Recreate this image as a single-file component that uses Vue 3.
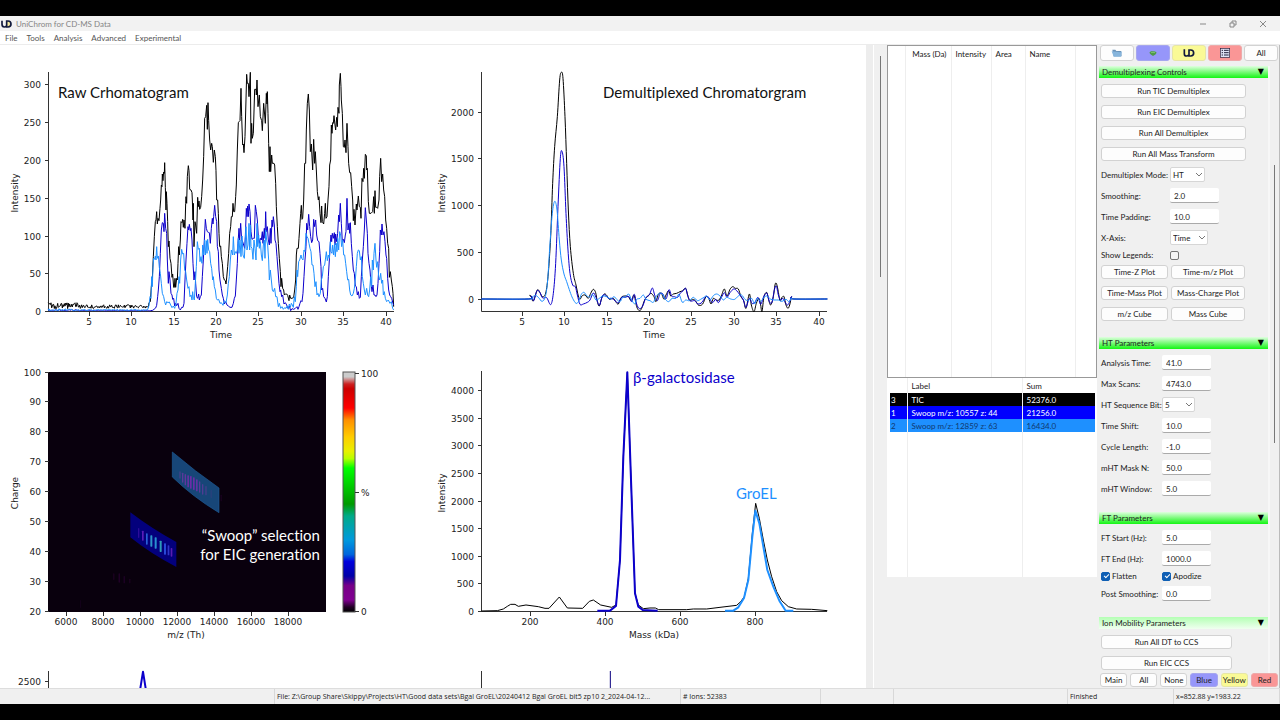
<template>
  <div class="screen">
    <div class="window">
      <!-- Title bar -->
      <header class="title-bar">
        <svg class="logo" viewBox="0 0 33 24" aria-hidden="true">
          <path d="M17 3h4q9 0 9 9t-9 9h-4z" fill="#f5e9a0" stroke="#111a3c" stroke-width="5" />
          <path d="M3 2v11q0 8 7 8 4 0 6-3" fill="none" stroke="#111a3c" stroke-width="5" />
        </svg>
        <h1 class="title">UniChrom for CD-MS Data</h1>
        <div class="window-buttons">
          <button class="window-btn" aria-label="Minimize">
            <svg viewBox="0 0 10 10"><path d="M2 5h6" /></svg>
          </button>
          <button class="window-btn" aria-label="Restore">
            <svg viewBox="0 0 10 10"><path d="M2 4h4v4h-4zM4 4v-2h4v4h-2" /></svg>
          </button>
          <button class="window-btn" aria-label="Close">
            <svg viewBox="0 0 10 10"><path d="M2 2l6 6M8 2l-6 6" /></svg>
          </button>
        </div>
      </header>

      <!-- Menu -->
      <nav class="menu-bar">
        <button v-for="m in menus" :key="m" class="menu-item">{{ m }}</button>
      </nav>

      <div class="workspace">
        <!-- Plots -->
        <main class="plots">
          <svg v-for="p in plots" :key="p.id" class="plot" viewBox="0 0 433 300" role="img" :aria-label="p.id">
            <template v-if="p.id === 'heatmap'">
              <defs>
                <linearGradient id="spectral" x1="0" y1="0" x2="0" y2="1">
                  <stop v-for="s in spectral" :key="s[0]" :offset="s[0]" :stop-color="s[1]" />
                </linearGradient>
              </defs>
              <rect x="48" y="27" width="278" height="240" fill="#09000d" />
              <g transform="translate(0 15) scale(.33333)">
                <path d="M391 457Q455 506 529 546V621Q450 580 391 532Z" fill="#03007c" />
                <path d="M517 276Q585 334 657 384V458Q580 412 517 351Z" fill="#174678" stroke="#1e5b96" stroke-width="2" />
                <rect v-for="(b, i) in bands" :key="i" :x="b[0]" :y="b[1]" :width="b[2]" :height="b[3]" :fill="b[4]" rx="2" />
              </g>
              <rect x="343" y="27" width="12" height="240" fill="url(#spectral)" stroke="#555" stroke-width="1" />
              <path d="M355 28.500h4M355 147.500h4M355 266.500h4" class="axis" />
              <text x="361" y="32" class="tick">100</text>
              <text x="361" y="151" class="tick">%</text>
              <text x="361" y="270" class="tick">0</text>
            </template>

            <path v-if="p.id !== 'heatmap'" class="axis" :d="`M48.500 ${p.top}V266.500H394`" />
            <g v-for="t in p.xTicks" :key="'x' + t[1]">
              <path class="axis" :d="`M${t[0]}.5 267v4`" />
              <text class="tick" :x="t[0]" y="280" text-anchor="middle">{{ t[1] }}</text>
            </g>
            <g v-for="t in p.yTicks" :key="'y' + t[1]">
              <path class="axis" :d="`M45 ${t[0]}.5h4`" />
              <text class="tick" x="41" :y="t[0] + 4" text-anchor="end">{{ t[1] }}</text>
            </g>
            <text v-if="p.xLabel" class="tick" :x="p.xMid" y="293" text-anchor="middle">{{ p.xLabel }}</text>
            <text v-if="p.yLabel" class="tick" :transform="`translate(${p.yLabelX} 148) rotate(-90)`" text-anchor="middle">{{ p.yLabel }}</text>

            <path
              v-for="(t, i) in p.traces"
              :key="i"
              class="trace"
              :d="t.d"
              :transform="`translate(${t.dx} ${t.dy}) scale(.33333)`"
              :stroke="t.color"
              :stroke-width="t.width || 1"
            />
            <text v-for="n in p.notes" :key="n.text" class="note" :x="n.x" :y="n.y" :fill="n.color" :text-anchor="n.anchor || 'start'">{{ n.text }}</text>
          </svg>
        </main>

        <div class="gutter"><span class="gutter-thumb"></span></div>

        <!-- Lists -->
        <section class="lists">
          <div class="mass-list">
            <table>
              <thead>
                <tr>
                  <th class="c-index"></th>
                  <th class="c-mass">Mass (Da)</th>
                  <th class="c-int">Intensity</th>
                  <th class="c-area">Area</th>
                  <th class="c-name">Name</th>
                  <th></th>
                </tr>
              </thead>
              <tbody>
                <tr><td v-for="n in 6" :key="n"></td></tr>
              </tbody>
            </table>
          </div>
          <div class="label-list">
            <table>
              <thead>
                <tr>
                  <th class="c-id"></th>
                  <th>Label</th>
                  <th class="c-sum">Sum</th>
                </tr>
              </thead>
              <tbody>
                <tr v-for="r in rows" :key="r.id" class="data-row" :class="r.tone">
                  <td>{{ r.id }}</td>
                  <td>{{ r.label }}</td>
                  <td>{{ r.sum }}</td>
                </tr>
                <tr class="filler"><td></td><td></td><td></td></tr>
              </tbody>
            </table>
          </div>
        </section>

        <!-- Controls -->
        <aside class="controls">
          <div class="tool-row">
            <button class="btn" aria-label="Open">
              <svg class="tool-icon" viewBox="0 0 36 30">
                <path d="M4 5h9l3 4h14l2 16H8z" fill="#6b93b8" />
                <path d="M2 10l27 3 4-4-3 17H8z" fill="#87b5dc" />
              </svg>
            </button>
            <button class="btn blue" aria-label="Process">
              <svg class="tool-icon" viewBox="0 0 36 30">
                <path d="M7 14q5-7 11-4 8-2 11 4-2 6-11 10-8-4-11-10z" fill="#4f9a4b" />
                <path d="M12 13h12" stroke="#83c575" stroke-width="3" />
              </svg>
            </button>
            <button class="btn yellow" aria-label="UniDec">
              <svg class="tool-icon" viewBox="0 0 36 30">
                <path d="M4 4v13q0 7 7 7 4 0 6-3" fill="none" stroke="#111a3c" stroke-width="5" />
                <path d="M18 6h5q9 0 9 9t-9 9h-5z" fill="none" stroke="#111a3c" stroke-width="5" />
              </svg>
            </button>
            <button class="btn red" aria-label="Peaks">
              <svg class="tool-icon" viewBox="0 0 36 30">
                <rect x="4" y="1" width="28" height="27" fill="#dfe3f5" stroke="#24213c" stroke-width="2" />
                <path d="M8 7h4M8 14h4M8 21h4M15 7h14M15 14h14M15 21h14" stroke="#24213c" stroke-width="3" />
              </svg>
            </button>
            <button class="btn">All</button>
          </div>

          <div class="panel-scroll">
            <div class="panels">
              <section class="panel">
                <button class="panel-head">Demultiplexing Controls<span class="arrow">▼</span></button>
                <div class="panel-body">
                  <div class="stack">
                    <button v-for="b in runButtons" :key="b" class="btn wide">{{ b }}</button>
                  </div>
                  <div class="field far">
                    <label for="mode">Demultiplex Mode:</label>
                    <span class="select-wrap">
                      <select id="mode"><option>HT</option></select>
                      <svg class="chevron" viewBox="0 0 8 5"><path d="M1 1l3 3 3-3" /></svg>
                    </span>
                  </div>
                  <div class="field far">
                    <label for="smooth">Smoothing:</label>
                    <input id="smooth" v-model="form.smoothing" type="text" />
                  </div>
                  <div class="field far">
                    <label for="padding">Time Padding:</label>
                    <input id="padding" v-model="form.padding" type="text" />
                  </div>
                  <div class="field far">
                    <label for="xaxis">X-Axis:</label>
                    <span class="select-wrap time">
                      <select id="xaxis"><option>Time</option></select>
                      <svg class="chevron" viewBox="0 0 8 5"><path d="M1 1l3 3 3-3" /></svg>
                    </span>
                  </div>
                  <div class="field far short">
                    <label for="legends">Show Legends:</label>
                    <input id="legends" v-model="form.legends" type="checkbox" />
                  </div>
                  <div class="pairs">
                    <button v-for="b in plotButtons" :key="b" class="btn">{{ b }}</button>
                  </div>
                </div>
              </section>

              <section class="panel">
                <button class="panel-head">HT Parameters<span class="arrow">▼</span></button>
                <div class="panel-body">
                  <div v-for="f in htFields" :key="f.id" class="field">
                    <label :for="f.id">{{ f.label }}</label>
                    <span v-if="f.select" class="select-wrap bit">
                      <select :id="f.id"><option>{{ f.value }}</option></select>
                      <svg class="chevron" viewBox="0 0 8 5"><path d="M1 1l3 3 3-3" /></svg>
                    </span>
                    <input v-else :id="f.id" v-model="f.value" type="text" />
                  </div>
                </div>
              </section>

              <section class="panel">
                <button class="panel-head">FT Parameters<span class="arrow">▼</span></button>
                <div class="panel-body">
                  <div class="field">
                    <label for="ft-start">FT Start (Hz):</label>
                    <input id="ft-start" v-model="form.ftStart" type="text" />
                  </div>
                  <div class="field">
                    <label for="ft-end">FT End (Hz):</label>
                    <input id="ft-end" v-model="form.ftEnd" type="text" />
                  </div>
                  <div class="field short">
                    <label class="check"><input v-model="form.flatten" type="checkbox" />Flatten</label>
                    <label class="check"><input v-model="form.apodize" type="checkbox" />Apodize</label>
                  </div>
                  <div class="field">
                    <label for="post">Post Smoothing:</label>
                    <input id="post" v-model="form.post" type="text" />
                  </div>
                </div>
              </section>

              <section class="panel">
                <button class="panel-head pale">Ion Mobility Parameters<span class="arrow">▼</span></button>
                <div class="panel-body">
                  <div class="stack">
                    <button class="btn medium">Run All DT to CCS</button>
                    <button class="btn medium">Run EIC CCS</button>
                  </div>
                </div>
              </section>
            </div>
            <div class="scroll-track"><span class="scroll-thumb"></span></div>
          </div>

          <div class="filter-row">
            <button v-for="f in filters" :key="f.label" class="btn" :class="f.tone">{{ f.label }}</button>
          </div>
        </aside>
      </div>

      <!-- Status -->
      <footer class="status-bar">
        <span class="cell first"></span>
        <span class="cell file">File: Z:\Group Share\Skippy\Projects\HT\Good data sets\Bgal GroEL\20240412 Bgal GroEL bit5 zp10 2_2024-04-12...</span>
        <span class="cell ions"># Ions: 52383</span>
        <span class="cell spare"></span>
        <span class="cell rest"></span>
        <span class="cell state">Finished</span>
        <span class="cell coords">x=852.88 y=1983.22</span>
      </footer>
    </div>
  </div>
</template>

<script setup>
import { reactive } from 'vue'

const menus = ['File', 'Tools', 'Analysis', 'Advanced', 'Experimental']
const runButtons = ['Run TIC Demultiplex', 'Run EIC Demultiplex', 'Run All Demultiplex', 'Run All Mass Transform']
const plotButtons = ['Time-Z Plot', 'Time-m/z Plot', 'Time-Mass Plot', 'Mass-Charge Plot', 'm/z Cube', 'Mass Cube']

const filters = [
  { label: 'Main' },
  { label: 'All' },
  { label: 'None' },
  { label: 'Blue', tone: 'blue' },
  { label: 'Yellow', tone: 'yellow' },
  { label: 'Red', tone: 'red' },
]

const rows = [
  { id: 3, label: 'TIC', sum: '52376.0', tone: 'black' },
  { id: 1, label: 'Swoop m/z: 10557 z: 44', sum: '21256.0', tone: 'deep' },
  { id: 2, label: 'Swoop m/z: 12859 z: 63', sum: '16434.0', tone: 'sky' },
]

const form = reactive({
  smoothing: '2.0',
  padding: '10.0',
  legends: false,
  ftStart: '5.0',
  ftEnd: '1000.0',
  flatten: true,
  apodize: true,
  post: '0.0',
})

const htFields = reactive([
  { id: 'analysis', label: 'Analysis Time:', value: '41.0' },
  { id: 'scans', label: 'Max Scans:', value: '4743.0' },
  { id: 'bit', label: 'HT Sequence Bit:', value: '5', select: true },
  { id: 'shift', label: 'Time Shift:', value: '10.0' },
  { id: 'cycle', label: 'Cycle Length:', value: '-1.0' },
  { id: 'mask', label: 'mHT Mask N:', value: '50.0' },
  { id: 'mwindow', label: 'mHT Window:', value: '5.0' },
])

// Colours of the heat map scale, top to bottom
const spectral = [
  [0, '#cccccc'], [0.02, '#cccccc'], [0.05, '#cc2222'], [0.07, '#cc0000'], [0.15, '#ff0000'],
  [0.2, '#ff9000'], [0.27, '#ffcc00'], [0.33, '#e8f000'], [0.36, '#b8ff00'], [0.4, '#00ff00'],
  [0.55, '#009a00'], [0.6, '#00aa88'], [0.7, '#0099dd'], [0.76, '#0066dd'], [0.79, '#0000dd'],
  [0.85, '#0000a8'], [0.89, '#770088'], [0.95, '#800090'], [0.98, '#200024'], [1, '#000000'],
]

// Charge state bands: x, y, width, height, colour
const bands = [
  [414, 504, 4, 30, '#2c0c9a'], [426, 512, 5, 30, '#5a1cb8'], [438, 520, 5, 34, '#2860d8'],
  [451, 526, 6, 34, '#2c94c8'], [464, 532, 6, 34, '#2890d0'], [479, 542, 6, 34, '#2c9cb8'],
  [492, 550, 6, 34, '#2848d8'], [503, 556, 5, 30, '#3034c8'], [512, 564, 5, 26, '#5a1cb0'],
  [538, 334, 4, 22, '#44408c'], [546, 338, 4, 30, '#5a3a9a'], [554, 342, 4, 34, '#62369e'],
  [562, 346, 5, 36, '#6432a4'], [570, 348, 5, 38, '#6a2ea8'], [579, 352, 5, 38, '#6a2ea8'],
  [588, 358, 5, 36, '#6432a4'], [597, 364, 4, 34, '#5a3a9a'], [606, 372, 4, 32, '#503c94'],
  [616, 378, 4, 28, '#463e8c'], [632, 390, 3, 24, '#30407f'], [662, 404, 3, 20, '#1d0024'],
  [340, 640, 3, 20, '#220028'], [356, 640, 3, 28, '#2c0034'], [371, 648, 3, 22, '#260030'],
  [388, 656, 3, 14, '#200026'], [240, 720, 2, 24, '#180020'],
]

// Straight line path through "x,y x,y" pairs
function line(text) {
  return 'M' + text.trim().split(/\s+/).join('L')
}

// Rounded path through the same kind of pairs
function smooth(text) {
  const pts = text.trim().split(/\s+/).map((s) => s.split(',').map(Number))
  let d = `M${pts[0]}`
  for (let i = 0; i < pts.length - 1; i++) {
    const [x1, y1] = pts[i]
    const [x2, y2] = pts[i + 1]
    const before = pts[i - 1] || pts[i]
    const after = pts[i + 2] || pts[i + 1]
    d += `C${x1 + (x2 - before[0]) / 6} ${y1 + (y2 - before[1]) / 6} ${x2 - (after[0] - x1) / 6} ${y2 - (after[1] - y1) / 6} ${x2} ${y2}`
  }
  return d
}

// Low detector noise before the first pulse
function noise(from, to, base, spread, seed) {
  let s = seed
  let out = ''
  for (let x = from; x < to; x += 2) {
    s = (s * 16807) % 2147483647
    const amp = x < 235 ? spread : spread * 0.6
    const mid = x < 235 ? base : base + spread * 0.3
    out += `${x},${(mid + (s / 2147483647 - 0.5) * 2 * amp).toFixed(1)} `
  }
  return out
}

const rawTotal = line(noise(145, 446, 917, 9, 77) + `
447,908 451,905 454,860 457,835 460,770 463,710 466,665 468,660 470,635 472,672 474,655 477,662 480,625 482,600 484,555 486,560 487,522
489,542 491,516 493,520 494,488 496,562 498,630 499,575 501,610 503,665 505,740 507,723 510,775 513,790 516,832 518,822 521,862
523,862 525,835 527,862 530,835 532,840 534,790 536,740 538,765 541,720 543,665 546,668 548,658 550,682 552,660 555,685 557,610
558,590 560,610 562,530 565,497 567,512 569,568 573,570 576,578 577,600 579,660 580,610 582,740 585,665 587,675 590,700 593,592
595,620 597,603 599,628 602,622 605,590 608,540 611,470 614,355 617,350 620,316 622,388 624,308 626,362 629,420 632,450 635,430
637,440 640,487 643,450 646,470 648,512 650,600 653,600 655,640 657,700 659,740 662,738 664,770 667,790 670,830 673,840 676,842
678,852 680,834 683,800 686,760 689,700 692,680 694,650 697,650 699,610 701,635 704,635 707,590 709,555 712,450 715,368 718,364
720,362 723,265 725,350 728,435 730,432 732,458 735,410 738,300 740,223 742,250 745,250 747,290 751,217 753,430 755,370 757,415
760,400 764,268 768,268 769,285 771,240 774,320 778,285 781,350 785,362 787,392 791,310 794,345 796,370 799,280 801,312 802,275
804,340 806,430 808,515 810,440 812,515 815,465 817,490 822,490 824,495 827,550 829,620 832,680 835,730 838,775 841,815 843,860
845,835 848,865 851,870 853,885 856,882 860,882 863,886 867,902 869,885 872,895 876,895 881,892 884,870 887,840 889,765 891,745
895,745 897,715 900,670 902,640 904,616 906,658 908,655 911,600 914,490 917,490 919,390 922,310 925,282 928,330 931,455 934,432
938,510 941,418 944,490 946,455 949,510 952,575 955,600 957,590 960,640 963,668 965,618 967,665 971,672 974,640 976,610 978,655
981,650 984,600 987,560 989,495 992,480 994,375 996,400 998,368 1000,370 1002,347 1005,375 1007,390 1010,352 1012,380 1014,322
1017,340 1018,255 1021,220 1023,260 1024,300 1027,340 1030,440 1033,442 1035,420 1038,458 1041,370 1044,440 1046,490 1049,518
1052,518 1055,560 1058,600 1060,662 1062,628 1065,675 1069,612 1071,630 1075,588 1078,620 1081,622 1083,655 1086,535 1089,545
1091,505 1093,535 1096,463 1099,468 1100,510 1102,505 1105,605 1108,640 1113,640 1118,635 1121,590 1123,640 1125,572 1127,622
1130,622 1133,625 1137,600 1139,530 1142,475 1145,545 1148,522 1151,570 1154,590 1157,660 1160,685 1163,730 1166,745 1168,832
1171,815 1174,840 1177,860 1179,880 1181,920`)

const rawBlue = line(noise(145, 450, 391, 2, 911) + `
452,392 458,391 462,388 467,384 470,376 473,350 475,330 478,290 481,220 484,150 487,128 490,130 492,155 494,100 497,145 500,160
502,240 505,310 507,275 510,300 513,340 516,345 518,358 521,355 524,378 527,370 530,377 534,370 537,385 541,390 545,382 549,382
552,370 555,300 558,240 561,190 564,140 566,150 568,133 571,152 573,145 576,180 579,250 582,300 585,275 587,310 590,350 593,355
596,342 598,360 601,350 604,345 607,290 610,240 613,180 616,118 619,145 622,155 625,157 628,158 631,190 634,145 637,115 639,132
641,110 644,76 647,110 650,125 652,200 655,215 657,270 660,300 664,325 667,345 670,355 673,372 677,365 681,375 685,378 690,382
696,382 700,370 703,355 706,348 709,300 712,250 714,190 717,145 719,180 722,130 725,180 728,185 731,195 734,205 736,170 739,85
741,110 743,78 745,110 747,72 750,95 753,155 756,178 760,175 763,175 766,76 769,95 772,120 775,170 778,190 781,175 784,180
787,155 789,190 791,165 793,145 795,175 797,95 799,155 802,140 805,180 808,195 811,145 813,190 816,120 818,140 820,110 823,135
825,180 828,190 831,230 834,270 837,310 840,335 842,330 845,350 848,345 852,372 856,368 860,375 864,385 868,378 872,392 876,386
881,388 886,385 891,380 894,388 897,380 900,370 903,362 906,365 909,340 912,290 915,240 918,200 920,130 923,150 926,103 929,140
932,170 935,188 938,180 941,118 944,140 947,120 950,165 953,182 957,185 960,220 963,260 965,330 968,325 971,350 975,355 979,366
982,350 985,290 988,240 991,190 993,165 995,185 997,160 1000,175 1003,158 1005,195 1007,162 1010,185 1013,160 1016,105 1018,125
1021,70 1024,130 1027,185 1030,178 1033,188 1036,165 1038,155 1041,55 1044,150 1047,130 1049,160 1051,128 1054,190 1057,230
1060,270 1063,280 1066,318 1069,320 1072,345 1075,335 1078,355 1081,352 1084,290 1087,240 1090,200 1093,150 1096,83 1099,120
1102,160 1104,220 1107,250 1110,270 1113,310 1116,335 1119,315 1122,345 1125,345 1128,350 1131,345 1134,310 1137,250 1139,215
1141,150 1144,165 1146,132 1149,165 1152,155 1155,185 1158,225 1160,235 1163,295 1166,330 1169,345 1172,350 1175,355 1179,370 1181,375`)

const rawSky = line(noise(145, 444, 389, 3, 4242) + `
447,376 450,350 453,355 455,290 457,320 459,260 461,235 464,238 466,228 468,240 470,200 472,235 475,228 478,262 481,280 484,310
487,340 491,350 494,365 497,375 500,365 504,368 508,366 512,375 516,383 520,378 524,385 528,370 531,340 534,330 537,290 539,310
542,240 545,208 548,222 551,220 554,270 557,275 560,300 564,325 567,320 570,350 573,345 576,360 578,335 580,355 583,360 586,310
589,260 592,185 595,208 598,205 600,245 603,230 606,250 608,195 611,225 614,180 616,225 619,182 621,220 623,178 626,210 629,215
632,250 635,265 638,300 640,290 643,320 646,330 649,355 652,360 656,358 660,370 664,368 669,376 673,362 678,368 682,345 685,310
688,290 691,240 694,210 698,225 700,170 703,225 706,215 709,220 712,210 715,175 717,220 720,180 723,230 726,168 729,225 733,235
736,175 738,140 741,210 744,195 747,130 749,210 751,135 753,200 756,205 759,238 762,180 765,205 768,240 771,130 773,200 776,165
778,205 781,185 784,225 787,242 790,195 793,180 795,235 797,150 800,180 803,195 806,240 808,300 811,270 814,300 817,330 820,335
824,325 827,350 831,350 835,380 838,370 842,385 846,380 850,388 854,383 858,385 862,378 865,388 868,372 871,382 874,370 877,375
880,382 883,350 886,365 889,320 891,270 893,290 896,245 899,240 903,225 905,235 909,240 912,210 915,215 918,160 921,170 924,175
927,190 930,205 933,215 936,255 939,255 942,280 945,320 948,305 951,345 954,340 957,350 961,340 964,300 967,290 970,260 974,255
976,240 979,215 982,242 985,225 988,235 991,185 993,215 996,220 998,195 1001,225 1004,190 1006,230 1009,190 1011,215 1013,175
1016,210 1019,155 1022,165 1025,200 1028,180 1031,225 1034,225 1037,250 1040,275 1043,300 1046,298 1049,330 1052,345 1056,348
1060,340 1063,325 1066,300 1069,260 1072,220 1075,210 1078,212 1081,240 1084,230 1087,290 1090,310 1093,330 1096,345 1100,325
1103,345 1106,350 1109,330 1112,290 1115,320 1117,240 1120,270 1122,220 1125,190 1128,240 1130,262 1133,245 1136,290 1139,300
1142,280 1145,310 1148,300 1150,345 1153,335 1156,355 1160,365 1165,360 1170,370 1174,365 1178,385 1181,390`)

const demuxTotal = smooth(`184,747 326,747 329,736 334,741 340,753 352,720 360,728 366,739 376,733 384,680 392,560 398,400 404,290 412,200 419,90 424,67
429,85 435,200 440,340 445,480 451,590 460,670 468,705 475,738 480,748 486,738 495,735 505,745 512,730 520,718 527,728 532,755
538,768 545,745 553,732 560,736 568,748 580,745 587,755 595,762 604,742 615,738 625,740 634,752 642,735 650,770 658,782 665,775
674,750 684,738 693,730 702,740 708,755 715,733 724,730 732,748 738,735 746,722 752,738 760,732 770,730 780,725 788,722 797,715
803,735 809,752 818,748 826,752 836,766 848,762 858,740 866,745 873,762 880,745 888,750 897,750 905,735 913,717 921,738 930,718
938,710 946,715 955,717 963,740 971,752 978,775 988,732 994,765 1002,785 1009,760 1017,745 1022,765 1026,785 1032,740 1040,727
1045,745 1052,765 1060,740 1065,705 1069,700 1074,720 1080,752 1086,742 1092,740 1098,765 1104,775 1109,765 1115,741 1122,747 1222,747`)

const demuxBlue = smooth(`184,747 326,747 333,738 341,752 351,722 360,728 368,744 380,743 392,764 400,730 407,640 414,470 421,325 426,304
432,350 438,490 444,600 450,670 458,705 466,710 472,735 480,763 490,762 502,757 510,750 520,729 528,742 538,766 547,738 556,735
565,745 575,745 585,752 595,758 605,742 615,742 627,740 635,755 643,733 650,762 658,776 668,768 678,742 688,735 697,714 704,735
712,752 720,732 728,731 738,747 747,719 755,738 763,740 773,742 782,728 790,722 797,715 804,740 812,753 824,752 834,762 846,757
857,740 867,743 877,758 887,748 895,758 903,745 913,728 921,742 930,728 941,717 950,722 960,735 970,750 978,772 988,745 996,760
1004,758 1014,742 1022,763 1032,738 1041,730 1048,755 1056,757 1063,720 1069,708 1075,735 1082,750 1089,745 1096,758 1103,765 1109,755
1115,740 1122,747 1222,747`)

const demuxSky = smooth(`184,747 326,747 336,742 346,736 356,743 366,754 376,740 383,690 390,580 397,490 404,454 411,480 418,570
424,630 432,672 440,695 450,725 458,745 468,760 476,754 484,733 492,727 500,737 508,741 518,734 528,750 538,745 548,738 560,740
572,747 582,740 590,748 600,755 608,742 616,741 626,732 634,748 644,762 650,748 660,745 670,735 678,748 690,752 700,757 708,740
718,730 727,732 735,747 746,755 756,745 768,745 777,733 787,757 797,750 808,752 820,742 832,752 842,748 852,742 860,738 870,750
880,737 890,732 900,738 910,750 920,742 932,747 944,748 955,738 965,735 975,748 985,752 995,745 1004,762 1012,745 1022,754 1032,742
1041,738 1051,747 1062,750 1075,750 1086,754 1098,748 1107,755 1115,744 1122,747 1222,747`)

const massTotal = line(`184,753 232,752 250,747 262,739 272,733 285,733 295,739 318,735 355,740 375,745 387,745 418,711 442,744 488,745
508,724 520,720 542,735 575,742 588,735 600,600 610,290 622,37 632,330 645,700 655,735 670,746 690,744 706,744 716,749 800,749
820,747 860,747 900,742 950,736 962,725 973,710 985,655 997,520 1007,430 1018,475 1030,540 1042,600 1055,650 1070,695 1085,722
1105,740 1130,747 1175,748 1222,752`)
const massBlue = line('532,752 570,752 588,738 600,600 610,290 622,37 632,330 645,700 655,740 668,750 713,752')
const massSky = line('915,752 940,752 955,742 972,714 985,660 997,530 1006,452 1018,490 1030,560 1042,630 1060,680 1078,722 1097,752 1120,752')

const BLUE = '#0c00cc'
const SKY = '#1e90ff'
const timeTicks = [[89, 5], [131, 10], [174, 15], [216, 20], [258, 25], [301, 30], [343, 35], [386, 40]]

const plots = [
  {
    id: 'raw',
    top: 27,
    xTicks: timeTicks,
    yTicks: [[39, 300], [77, 250], [115, 200], [153, 150], [191, 100], [228, 50], [266, 0]],
    xLabel: 'Time',
    xMid: 221,
    yLabel: 'Intensity',
    yLabelX: 18,
    traces: [
      { d: rawTotal, dx: 0, dy: -45, color: '#000' },
      { d: rawBlue, dx: 0, dy: 135, color: BLUE },
      { d: rawSky, dx: 0, dy: 135, color: SKY },
    ],
    notes: [{ text: 'Raw Crhomatogram', x: 58, y: 53, color: '#111' }],
  },
  {
    id: 'demultiplexed',
    top: 27,
    xTicks: timeTicks,
    yTicks: [[67, 2000], [113, 1500], [160, 1000], [207, 500], [254, 0]],
    xLabel: 'Time',
    xMid: 221,
    yLabel: 'Intensity',
    yLabelX: 12,
    traces: [
      { d: demuxTotal, dx: -13, dy: 5, color: '#000' },
      { d: demuxBlue, dx: -13, dy: 5, color: BLUE },
      { d: demuxSky, dx: -13, dy: 5, color: SKY },
    ],
    notes: [{ text: 'Demultiplexed Chromatorgram', x: 170, y: 53, color: '#111' }],
  },
  {
    id: 'heatmap',
    xTicks: [[66, 6000], [103, 8000], [140, 10000], [177, 12000], [214, 14000], [251, 16000], [288, 18000]],
    yTicks: [[27, 100], [56, 90], [86, 80], [116, 70], [146, 60], [176, 50], [206, 40], [236, 30], [266, 20]],
    xLabel: 'm/z (Th)',
    xMid: 186,
    yLabel: 'Charge',
    yLabelX: 18,
    notes: [
      { text: '“Swoop” selection', x: 320, y: 196, color: '#fff', anchor: 'end' },
      { text: 'for EIC generation', x: 320, y: 215, color: '#fff', anchor: 'end' },
    ],
  },
  {
    id: 'mass',
    top: 26,
    xTicks: [[97, 200], [172, 400], [247, 600], [322, 800]],
    yTicks: [[45, 4000], [73, 3500], [100, 3000], [128, 2500], [156, 2000], [183, 1500], [211, 1000], [238, 500], [266, 0]],
    xLabel: 'Mass (kDa)',
    xMid: 221,
    yLabel: 'Intensity',
    yLabelX: 12,
    traces: [
      { d: massTotal, dx: -13, dy: 15, color: '#000' },
      { d: massBlue, dx: -13, dy: 15, color: BLUE, width: 2 },
      { d: massSky, dx: -13, dy: 15, color: SKY, width: 2 },
    ],
    notes: [
      { text: 'β-galactosidase', x: 200, y: 38, color: BLUE },
      { text: 'GroEL', x: 303, y: 154, color: SKY },
    ],
  },
  {
    id: 'mz',
    top: 26,
    xTicks: [],
    yTicks: [[36, 2500]],
    traces: [{ d: line('405,230 429,80 453,230'), dx: 0, dy: 0, color: BLUE, width: 2 }],
  },
  {
    id: 'mass-total',
    top: 26,
    xTicks: [],
    yTicks: [],
    traces: [{ d: line('532,78 532,700'), dx: 0, dy: 0, color: '#0a0080', width: 1 }],
  },
]
</script>

<style>
body {
  margin: 0;
  background: #000;
}
</style>

<style scoped>
* {
  box-sizing: border-box;
}
.screen {
  height: 100vh;
  padding: 16px 0;
  background: #000;
  font-family: Lato, 'Open Sans', sans-serif;
  font-variant-ligatures: none;
  font-size: 8px;
  line-height: 12px;
  color: #222;
}
.window {
  height: 100%;
  display: flex;
  flex-direction: column;
  background: #f0f0f0;
}
button,
input,
select {
  font: inherit;
  font-variant-ligatures: none;
  color: inherit;
  margin: 0;
}

/* Title and menu */
.title-bar {
  display: flex;
  align-items: center;
  height: 15px;
  background: #f2f2f2;
  color: #858585;
}
.logo {
  width: 11px;
  height: 8px;
  margin: 0 4px 0 1px;
}
.title {
  margin: 0;
  font-size: 8px;
  font-weight: 400;
}
.window-buttons {
  display: flex;
  gap: 20px;
  margin-left: auto;
  padding-right: 12px;
}
.window-btn {
  display: flex;
  padding: 0;
  border: 0;
  background: none;
}
.window-btn svg {
  width: 10px;
  height: 10px;
  fill: none;
  stroke: #888;
}
.menu-bar {
  display: flex;
  gap: 9px;
  height: 14px;
  padding: 0 5px;
  background: #fff;
  border-bottom: 1px solid #ececec;
}
.menu-item {
  padding: 0;
  border: 0;
  background: none;
  color: #555;
}

/* Workspace */
.workspace {
  flex: 1;
  min-height: 0;
  display: flex;
}
.plots {
  flex: 1;
  min-width: 0;
  display: grid;
  grid-template-columns: 1fr 1fr;
  grid-auto-rows: max-content;
  overflow: hidden;
  background: #fff;
}
.plot {
  display: block;
  width: 100%;
  aspect-ratio: 433 / 300;
}
.axis {
  fill: none;
  stroke: #333;
  stroke-width: 1;
}
.tick {
  font-family: 'DejaVu Sans', sans-serif;
  font-size: 9px;
  fill: #222;
}
.trace {
  fill: none;
  vector-effect: non-scaling-stroke;
  stroke-linejoin: round;
}
.note {
  font-size: 15px;
}
.gutter {
  width: 21px;
  border-left: 7px solid #ededed;
  box-shadow: inset 1px 0 #fff;
  display: flex;
  justify-content: center;
  padding-top: 11px;
}
.gutter-thumb {
  width: 1px;
  height: 221px;
  background: #777;
}

/* Lists */
.lists {
  width: 210px;
  display: flex;
  flex-direction: column;
}
.mass-list {
  height: 333px;
  border: 1px solid #999;
  background: #fff;
}
table {
  width: 100%;
  height: 100%;
  border-collapse: collapse;
  table-layout: fixed;
}
th,
td {
  padding: 0 4px;
  font-weight: 400;
  text-align: left;
  white-space: nowrap;
  border-right: 1px solid #eee;
}
th {
  height: 15px;
}
th:last-child,
td:last-child {
  border-right: 0;
}
.mass-list .c-index {
  width: 17px;
}
.mass-list .c-mass {
  width: 46px;
  text-align: right;
}
.c-int {
  width: 40px;
}
.c-area {
  width: 34px;
}
.c-name {
  width: 50px;
}
.label-list {
  height: 199px;
  padding: 0 2px 0 3px;
  background: #fff;
}
.c-id {
  width: 17px;
}
.c-sum {
  width: 73px;
}
.data-row {
  height: 13px;
}
.data-row td {
  border-right: 1px solid #eee;
}
.data-row td:first-child {
  padding: 0 1px;
}
.data-row td:last-child {
  border-right: 0;
}
.data-row.black {
  background: #000;
  color: #fff;
}
.data-row.deep {
  background: #0000ff;
  color: #fff;
}
.data-row.sky {
  background: #1e90ff;
  color: #113a70;
}

/* Controls */
.controls {
  width: 183px;
  display: flex;
  flex-direction: column;
  border-right: 1px solid #bbb;
}
.btn {
  display: flex;
  align-items: center;
  justify-content: center;
  height: 14px;
  padding: 0;
  border: 1px solid #d2d2d2;
  border-radius: 3px;
  background: #fdfdfd;
  white-space: nowrap;
}
.btn.blue {
  background: #9696fa;
  border-color: #a6a6ee;
}
.btn.yellow {
  background: #fafa96;
  border-color: #e6e6a6;
}
.btn.red {
  background: #fa9696;
  border-color: #eeaaaa;
}
.tool-row {
  display: grid;
  grid-template-columns: repeat(5, 1fr);
  gap: 2px;
  padding: 0 1px 0 3px;
}
.tool-row .btn {
  height: 16px;
}
.tool-icon {
  width: 12px;
  height: 10px;
}
.panel-scroll {
  flex: 1;
  min-height: 0;
  display: flex;
  overflow: hidden;
  padding-top: 5px;
}
.panels {
  flex: 1;
  padding-left: 2px;
}
.panel {
  margin-bottom: 16px;
}
.panel-head {
  display: flex;
  justify-content: space-between;
  align-items: center;
  width: 100%;
  height: 12px;
  padding: 0 4px 0 3px;
  border: 0;
  background: linear-gradient(#e0ffe0, #14f514);
  text-align: left;
}
.panel-head.pale {
  background: linear-gradient(#b4ffb4, #f0fff0);
}
.arrow {
  font-family: 'DejaVu Sans', sans-serif;
  color: #000;
}
.panel-body {
  display: flex;
  flex-direction: column;
  gap: 6px;
  padding: 6px 0 0 2px;
}
.stack {
  display: grid;
  gap: 7px;
}
.wide {
  width: 145px;
}
.medium {
  width: 131px;
}
.field {
  display: grid;
  grid-template-columns: 61px 1fr;
  align-items: center;
  align-content: center;
  height: 15px;
  white-space: nowrap;
}
.field.far {
  grid-template-columns: 69px 1fr;
}
.field.short {
  height: 8px;
}
input[type='text'] {
  width: 49px;
  height: 15px;
  padding: 1px 4px 0;
  border: 0;
  border-bottom: 1px solid #aaa;
  border-radius: 2px;
  background: #fff;
  outline: none;
}
input[type='checkbox'] {
  appearance: none;
  width: 9px;
  height: 9px;
  border: 1px solid #777;
  border-radius: 2px;
  background: #f6f6f6;
}
input[type='checkbox']:checked {
  border-color: #0f5fb4;
  background: #0f5fb4;
  position: relative;
}
input[type='checkbox']:checked::after {
  content: '';
  position: absolute;
  left: 2px;
  top: 1px;
  width: 4px;
  height: 2px;
  border-left: 1px solid #fff;
  border-bottom: 1px solid #fff;
  transform: rotate(-45deg);
}
.check {
  display: flex;
  align-items: center;
  gap: 2px;
}
.select-wrap {
  position: relative;
  width: 35px;
}
.select-wrap.time {
  width: 38px;
}
.select-wrap.bit {
  width: 33px;
}
select {
  display: block;
  width: 100%;
  height: 15px;
  padding: 0 2px;
  border: 1px solid #d6d6d6;
  border-radius: 2px;
  background: #fff;
  appearance: none;
}
.chevron {
  position: absolute;
  right: 2px;
  top: 5px;
  width: 8px;
  height: 5px;
  fill: none;
  stroke: #777;
  pointer-events: none;
}
.pairs {
  display: grid;
  grid-template-columns: 67px 74px;
  gap: 7px 3px;
}
.scroll-track {
  width: 11px;
  display: flex;
  justify-content: center;
  padding-top: 99px;
  border-left: 2px solid #f7f7f7;
}
.scroll-thumb {
  width: 1px;
  height: 278px;
  background: #777;
}
.filter-row {
  display: grid;
  grid-template-columns: repeat(6, 1fr);
  gap: 3px;
  padding: 0 1px 1px 3px;
}

/* Status */
.status-bar {
  display: flex;
  height: 16px;
  border-top: 1px solid #ddd;
  font-family: 'Open Sans', sans-serif;
  font-size: 7px;
}
.cell {
  padding: 2px;
  border-right: 1px solid #d8d8d8;
  white-space: nowrap;
  overflow: hidden;
}
.first {
  width: 275px;
}
.file {
  width: 406px;
}
.ions {
  width: 140px;
}
.spare {
  width: 73px;
}
.rest {
  flex: 1;
}
.state {
  width: 106px;
}
.coords {
  width: 106px;
}
</style>
